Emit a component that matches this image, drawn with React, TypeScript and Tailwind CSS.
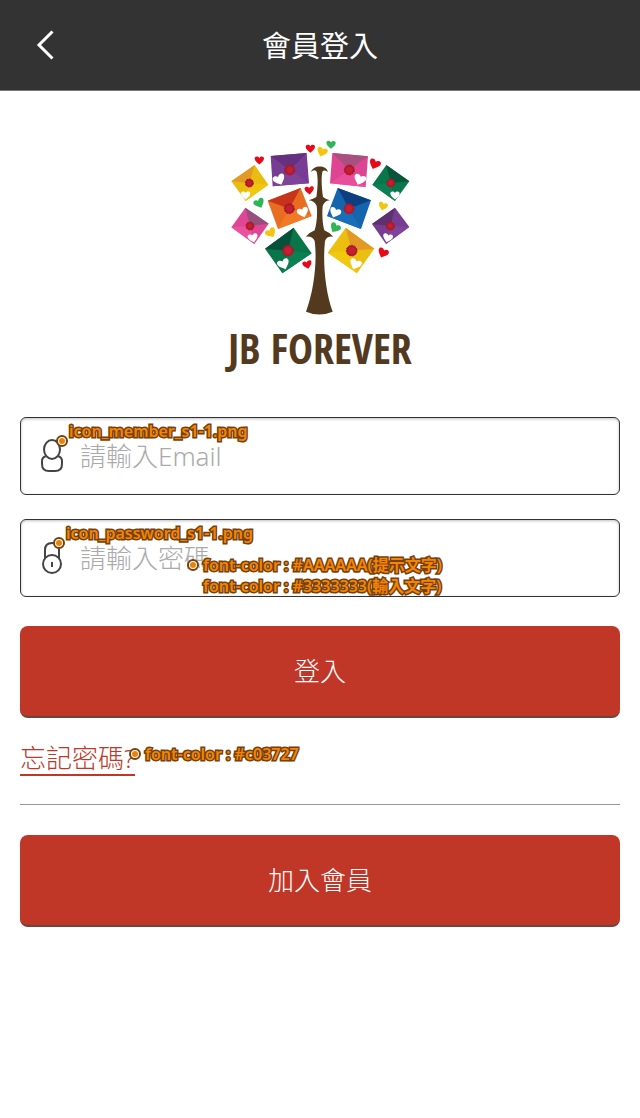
import React from "react";

type Envelope = {
  corners: [string, string, string, string];
  seal: [number, number];
  body: string;
  side: string;
  flap: string;
  size: number;
};

/* The first two corners are the ends of the flap edge. */
const envelopes: Envelope[] = [
  { corners: ["34,154", "104,105", "145,164", "77,213"], seal: [88, 159], body: "#f2c50f", side: "#e9bd10", flap: "#e29a24", size: 14 },
  { corners: ["152,78", "260,69", "267,160", "158,169"], seal: [209, 120], body: "#7f4499", side: "#773d92", flap: "#653080", size: 17 },
  { corners: ["337,69", "444,79", "437,171", "330,160"], seal: [388, 120], body: "#e94e9b", side: "#df4492", flap: "#a8507f", size: 17 },
  { corners: ["499,105", "568,154", "525,213", "457,164"], seal: [512, 159], body: "#0b8052", side: "#08774b", flap: "#07553a", size: 14 },
  { corners: ["143,212", "242,174", "275,258", "174,297"], seal: [208, 236], body: "#f07a25", side: "#e96d20", flap: "#c6341b", size: 17 },
  { corners: ["353,174", "453,211", "423,297", "321,258"], seal: [387, 236], body: "#186eb9", side: "#1565ae", flap: "#0d3f80", size: 17 },
  { corners: ["76,233", "146,281", "103,342", "34,292"], seal: [90, 288], body: "#e9529e", side: "#df4794", flap: "#96507e", size: 14 },
  { corners: ["456,282", "525,233", "568,291", "498,342"], seal: [511, 288], body: "#7f4499", side: "#763d90", flap: "#5d3070", size: 14 },
  { corners: ["135,356", "221,293", "275,370", "187,430"], seal: [204, 362], body: "#0b8052", side: "#08764a", flap: "#07513a", size: 18 },
  { corners: ["377,293", "463,356", "411,430", "323,368"], seal: [395, 362], body: "#f2c80f", side: "#ebbf10", flap: "#e29a24", size: 18 },
];

/* x, y, half width, rotation, colour */
const hearts: [number, number, number, number, string][] = [
  [118, 91, 14, 0, "#e60a18"],
  [271, 56, 14, 0, "#e60a18"],
  [306, 66, 16, 18, "#f2c50f"],
  [333, 44, 14, 2, "#2fb457"],
  [464, 103, 17, 22, "#e60a18"],
  [268, 181, 14, -5, "#e60a18"],
  [118, 220, 16, -26, "#2fb457"],
  [489, 229, 14, 15, "#f2c50f"],
  [153, 309, 16, -32, "#f2c50f"],
  [345, 294, 16, 32, "#2fb457"],
  [489, 369, 16, 24, "#e60a18"],
  [262, 404, 14, -14, "#e60a18"],
  [77, 196, 14, 0, "#ffffff"],
  [178, 149, 18, -24, "#ffffff"],
  [419, 149, 18, 20, "#ffffff"],
  [525, 196, 14, 0, "#ffffff"],
  [249, 247, 17, -18, "#ffffff"],
  [345, 248, 17, 22, "#ffffff"],
  [99, 324, 15, -14, "#ffffff"],
  [503, 324, 15, 14, "#ffffff"],
  [191, 403, 18, -22, "#ffffff"],
  [406, 403, 18, 22, "#ffffff"],
];

function TreeLogo() {
  return (
    <svg viewBox="0 0 600 560" className="w-50" aria-hidden="true">
      <path
        fill="#533a1e"
        d="M273 126C278 106 318 102 324 126Q311 118 307 125C304 142 304 168 309 201Q316 206 329 211Q313 213 308 228C306 252 307 280 313 301Q326 306 340 320Q320 318 315 333C308 394 315 482 338 545Q298 562 258 545C282 482 292 394 284 333Q278 318 257 320Q271 306 284 301C290 280 293 252 290 228Q284 213 266 211Q280 206 289 201C294 168 294 142 290 125Q282 116 273 126Z"
      />
      {envelopes.map((e) => {
        const centre = e.seal.join(",");
        return (
          <g key={centre}>
            <polygon points={e.corners.join(" ")} fill={e.side} />
            <polygon points={`${centre} ${e.corners[2]} ${e.corners[3]}`} fill={e.body} />
            <polygon points={`${e.corners[0]} ${e.corners[1]} ${centre}`} fill={e.flap} />
            <circle cx={e.seal[0]} cy={e.seal[1]} r={e.size - 2} fill="#b31b2b" stroke="#a31525" strokeWidth="3" strokeDasharray="6 3" />
            <circle cx={e.seal[0]} cy={e.seal[1]} r={e.size - 6} fill="#c32032" stroke="#a31525" strokeWidth="1" />
          </g>
        );
      })}
      {hearts.map(([x, y, r, turn, colour]) => (
        <path
          key={`${x}-${y}`}
          fill={colour}
          transform={`translate(${x} ${y}) rotate(${turn}) scale(${r / 10})`}
          d="M0 9C-4 5-10 1-10-4C-10-9-3-10 0-5C3-10 10-9 10-4C10 1 4 5 0 9Z"
        />
      ))}
    </svg>
  );
}

function MemberIcon() {
  return (
    <svg viewBox="0 0 24 34" className="h-[34px] w-6" fill="none" stroke="#444" strokeWidth="2" aria-hidden="true">
      <path d="M6 17C3 18 2 20 2 22V25Q2 32 9 32H15Q22 32 22 25V22C22 20 21 18 18 17" />
      <ellipse cx="12" cy="10.500" rx="8" ry="9.500" />
    </svg>
  );
}

function PasswordIcon() {
  return (
    <svg viewBox="0 0 24 34" className="h-[34px] w-6" fill="none" stroke="#444" strokeWidth="2" aria-hidden="true">
      <path d="M5 18V9Q5 2 12 2Q19 2 19 9V18" />
      <circle cx="12" cy="23" r="9" />
      <path d="M12 21V26" />
    </svg>
  );
}

type NoteProps = { lines: string[]; className: string; low?: boolean };

function Note({ lines, className, low = false }: NoteProps) {
  return (
    <div className={`pointer-events-none absolute z-10 flex items-start ${low ? "gap-px" : "gap-1"} ${className}`}>
      <svg viewBox="0 0 12 12" className={`size-3 shrink-0 ${low ? "mt-3.5" : "mt-1"}`} aria-hidden="true">
        <circle cx="6" cy="6" r="5" fill="#fff" stroke="#74400b" strokeWidth="2" />
        <circle cx="6" cy="6" r="3" fill="#ec8204" />
      </svg>
      <span className="font-['Noto_Sans','Noto_Sans_CJK_TC',sans-serif] text-[16px] leading-[21px] font-semibold whitespace-nowrap text-[#f58400] [-webkit-text-stroke:3px_#74400b] [paint-order:stroke_fill]">
        {lines.map((line) => (
          <span key={line} className="block">
            {line}
          </span>
        ))}
      </span>
    </div>
  );
}

type FieldProps = {
  id: string;
  type: string;
  placeholder: string;
  icon: React.ReactNode;
  children: React.ReactNode;
};

function Field({ id, type, placeholder, icon, children }: FieldProps) {
  return (
    <div className="relative flex h-[78px] items-center gap-4 rounded-md border border-[#333] pl-[19px] shadow-[inset_0_1px_3px_rgba(0,0,0,0.25)]">
      <label htmlFor={id} aria-label={placeholder}>
        {icon}
      </label>
      <input
        id={id}
        type={type}
        placeholder={placeholder}
        className="h-full min-w-0 flex-1 bg-transparent font-light text-[#333] outline-none placeholder:text-[#aaa]"
      />
      {children}
    </div>
  );
}

const buttonStyle =
  "h-23 w-full rounded-lg border-b-2 border-[#6e423d] bg-[#c03727] pt-0.5 font-light text-white";

export default function App() {
  return (
    <div className="bg-white font-['Noto_Sans','Noto_Sans_CJK_TC',sans-serif] text-[26px] font-light">
      <header className="grid h-[91px] grid-cols-[90px_1fr_90px] items-center border-b border-[#777] bg-[#333] text-white">
        <button type="button" aria-label="返回" className="flex h-full items-center justify-center">
          <svg viewBox="0 0 18 30" className="h-[30px] w-[18px]" fill="none" stroke="currentColor" strokeWidth="3" aria-hidden="true">
            <path d="M16.500 1.500L3 15L16.500 28.500" />
          </svg>
        </button>
        <h1 className="pt-0.5 text-center text-[29px] font-normal">會員登入</h1>
      </header>

      <main className="px-5">
        <div className="flex flex-col items-center pt-[39px]">
          <TreeLogo />
          <p className="h-25 font-['Noto_Sans_ExtraCondensed','Open_Sans_Condensed','Roboto_Condensed','Liberation_Sans_Narrow',sans-serif] text-[42px] leading-[62px] font-medium whitespace-nowrap text-[#533a1e]">
            JB FOREVER
          </p>
        </div>

        <form className="flex flex-col" onSubmit={(e) => e.preventDefault()}>
          <div className="flex flex-col gap-6">
            <Field id="email" type="email" placeholder="請輸入Email" icon={<MemberIcon />}>
              <Note low className="top-[3px] left-[35px]" lines={["icon_member_s1-1.png"]} />
            </Field>
            <Field id="password" type="password" placeholder="請輸入密碼" icon={<PasswordIcon />}>
              <Note low className="top-[3px] left-[32px]" lines={["icon_password_s1-1.png"]} />
              <Note
                className="top-[35px] left-[166px]"
                lines={["font-color : #AAAAAA(提示文字)", "font-color : #3333333(輸入文字)"]}
              />
            </Field>
          </div>
          <button type="submit" className={`mt-[29px] ${buttonStyle}`}>
            登入
          </button>
        </form>

        <div className="relative mt-6 flex">
          <a href="#forgot" className="border-b-2 border-[#c03727] leading-8 text-[#c03727]">
            忘記密碼?
          </a>
          <Note className="top-0.5 left-[109px]" lines={["font-color : #c03727"]} />
        </div>

        <hr className="mt-7 mb-[30px] border-[#999]" />

        <button type="button" className={buttonStyle}>
          加入會員
        </button>
      </main>
    </div>
  );
}
